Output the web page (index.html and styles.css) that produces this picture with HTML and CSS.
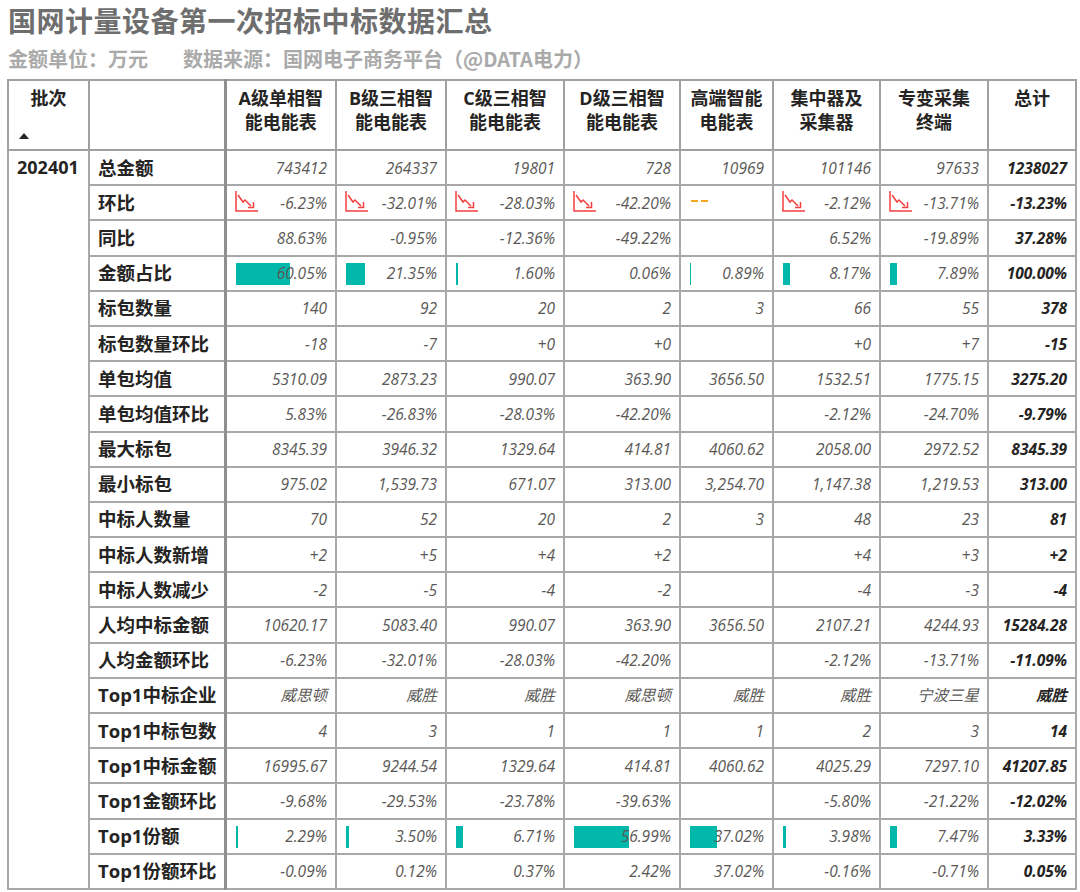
FILE: index.html
```html
<!DOCTYPE html>
<html lang="zh">
<head>
<meta charset="utf-8">
<title>国网计量设备第一次招标中标数据汇总</title>
<link rel="stylesheet" href="styles.css">
</head>
<body>
<div class="page">
  <h1 class="title">国网计量设备第一次招标中标数据汇总</h1>
  <div class="sub"><span>金额单位：万元</span><span>数据来源：国网电子商务平台（@DATA电力）</span></div>
  <table class="grid">
    <colgroup>
      <col class="c-batch"><col class="c-label"><col class="c-a"><col class="c-b"><col class="c-c"><col class="c-d"><col class="c-h"><col class="c-j"><col class="c-z"><col class="c-t">
    </colgroup>
    <thead>
      <tr>
        <th class="hb"><div class="hb-t">批次</div><div class="sort"></div></th>
        <th class="hl"></th>
        <th>A级单相智<br>能电能表</th>
        <th>B级三相智<br>能电能表</th>
        <th>C级三相智<br>能电能表</th>
        <th>D级三相智<br>能电能表</th>
        <th>高端智能<br>电能表</th>
        <th>集中器及<br>采集器</th>
        <th>专变采集<br>终端</th>
        <th>总计</th>
      </tr>
    </thead>
    <tbody>
      <tr><td class="batch" rowspan="21">202401</td><td class="lbl">总金额</td><td>743412</td><td>264337</td><td>19801</td><td>728</td><td>10969</td><td>101146</td><td>97633</td><td class="tot">1238027</td></tr>
      <tr><td class="lbl">环比</td>
        <td><div class="trend"><svg class="ico" viewBox="0 0 23 21"><path d="M1 0V20H23"/><path d="M3 4L8 11L10 9L16 15"/><path d="M18.5 11V16.5H13"/></svg><span>-6.23%</span></div></td>
        <td><div class="trend"><svg class="ico" viewBox="0 0 23 21"><path d="M1 0V20H23"/><path d="M3 4L8 11L10 9L16 15"/><path d="M18.5 11V16.5H13"/></svg><span>-32.01%</span></div></td>
        <td><div class="trend"><svg class="ico" viewBox="0 0 23 21"><path d="M1 0V20H23"/><path d="M3 4L8 11L10 9L16 15"/><path d="M18.5 11V16.5H13"/></svg><span>-28.03%</span></div></td>
        <td><div class="trend"><svg class="ico" viewBox="0 0 23 21"><path d="M1 0V20H23"/><path d="M3 4L8 11L10 9L16 15"/><path d="M18.5 11V16.5H13"/></svg><span>-42.20%</span></div></td>
        <td><div class="trend"><span class="dash"><i></i><i></i></span><span></span></div></td>
        <td><div class="trend"><svg class="ico" viewBox="0 0 23 21"><path d="M1 0V20H23"/><path d="M3 4L8 11L10 9L16 15"/><path d="M18.5 11V16.5H13"/></svg><span>-2.12%</span></div></td>
        <td><div class="trend"><svg class="ico" viewBox="0 0 23 21"><path d="M1 0V20H23"/><path d="M3 4L8 11L10 9L16 15"/><path d="M18.5 11V16.5H13"/></svg><span>-13.71%</span></div></td>
        <td class="tot">-13.23%</td></tr>
      <tr><td class="lbl">同比</td><td>88.63%</td><td>-0.95%</td><td>-12.36%</td><td>-49.22%</td><td></td><td>6.52%</td><td>-19.89%</td><td class="tot">37.28%</td></tr>
      <tr><td class="lbl">金额占比</td>
        <td class="bar"><span class="b" style="--v:0.6005"></span><span class="n">60.05%</span></td>
        <td class="bar"><span class="b" style="--v:0.2135"></span><span class="n">21.35%</span></td>
        <td class="bar"><span class="b" style="--v:0.016"></span><span class="n">1.60%</span></td>
        <td class="bar"><span class="b" style="--v:0.0006"></span><span class="n">0.06%</span></td>
        <td class="bar"><span class="b" style="--v:0.0089"></span><span class="n">0.89%</span></td>
        <td class="bar"><span class="b" style="--v:0.0817"></span><span class="n">8.17%</span></td>
        <td class="bar"><span class="b" style="--v:0.0789"></span><span class="n">7.89%</span></td>
        <td class="tot">100.00%</td></tr>
      <tr><td class="lbl">标包数量</td><td>140</td><td>92</td><td>20</td><td>2</td><td>3</td><td>66</td><td>55</td><td class="tot">378</td></tr>
      <tr><td class="lbl">标包数量环比</td><td>-18</td><td>-7</td><td>+0</td><td>+0</td><td></td><td>+0</td><td>+7</td><td class="tot">-15</td></tr>
      <tr><td class="lbl">单包均值</td><td>5310.09</td><td>2873.23</td><td>990.07</td><td>363.90</td><td>3656.50</td><td>1532.51</td><td>1775.15</td><td class="tot">3275.20</td></tr>
      <tr><td class="lbl">单包均值环比</td><td>5.83%</td><td>-26.83%</td><td>-28.03%</td><td>-42.20%</td><td></td><td>-2.12%</td><td>-24.70%</td><td class="tot">-9.79%</td></tr>
      <tr><td class="lbl">最大标包</td><td>8345.39</td><td>3946.32</td><td>1329.64</td><td>414.81</td><td>4060.62</td><td>2058.00</td><td>2972.52</td><td class="tot">8345.39</td></tr>
      <tr><td class="lbl">最小标包</td><td>975.02</td><td>1,539.73</td><td>671.07</td><td>313.00</td><td>3,254.70</td><td>1,147.38</td><td>1,219.53</td><td class="tot">313.00</td></tr>
      <tr><td class="lbl">中标人数量</td><td>70</td><td>52</td><td>20</td><td>2</td><td>3</td><td>48</td><td>23</td><td class="tot">81</td></tr>
      <tr><td class="lbl">中标人数新增</td><td>+2</td><td>+5</td><td>+4</td><td>+2</td><td></td><td>+4</td><td>+3</td><td class="tot">+2</td></tr>
      <tr><td class="lbl">中标人数减少</td><td>-2</td><td>-5</td><td>-4</td><td>-2</td><td></td><td>-4</td><td>-3</td><td class="tot">-4</td></tr>
      <tr><td class="lbl">人均中标金额</td><td>10620.17</td><td>5083.40</td><td>990.07</td><td>363.90</td><td>3656.50</td><td>2107.21</td><td>4244.93</td><td class="tot">15284.28</td></tr>
      <tr><td class="lbl">人均金额环比</td><td>-6.23%</td><td>-32.01%</td><td>-28.03%</td><td>-42.20%</td><td></td><td>-2.12%</td><td>-13.71%</td><td class="tot">-11.09%</td></tr>
      <tr><td class="lbl">Top1中标企业</td><td>威思顿</td><td>威胜</td><td>威胜</td><td>威思顿</td><td>威胜</td><td>威胜</td><td>宁波三星</td><td class="tot">威胜</td></tr>
      <tr><td class="lbl">Top1中标包数</td><td>4</td><td>3</td><td>1</td><td>1</td><td>1</td><td>2</td><td>3</td><td class="tot">14</td></tr>
      <tr><td class="lbl">Top1中标金额</td><td>16995.67</td><td>9244.54</td><td>1329.64</td><td>414.81</td><td>4060.62</td><td>4025.29</td><td>7297.10</td><td class="tot">41207.85</td></tr>
      <tr><td class="lbl">Top1金额环比</td><td>-9.68%</td><td>-29.53%</td><td>-23.78%</td><td>-39.63%</td><td></td><td>-5.80%</td><td>-21.22%</td><td class="tot">-12.02%</td></tr>
      <tr><td class="lbl">Top1份额</td>
        <td class="bar"><span class="b" style="--v:0.0229"></span><span class="n">2.29%</span></td>
        <td class="bar"><span class="b" style="--v:0.035"></span><span class="n">3.50%</span></td>
        <td class="bar"><span class="b" style="--v:0.0671"></span><span class="n">6.71%</span></td>
        <td class="bar"><span class="b" style="--v:0.5699"></span><span class="n">56.99%</span></td>
        <td class="bar"><span class="b" style="--v:0.3702"></span><span class="n">37.02%</span></td>
        <td class="bar"><span class="b" style="--v:0.0398"></span><span class="n">3.98%</span></td>
        <td class="bar"><span class="b" style="--v:0.0747"></span><span class="n">7.47%</span></td>
        <td class="tot">3.33%</td></tr>
      <tr><td class="lbl">Top1份额环比</td><td>-0.09%</td><td>0.12%</td><td>0.37%</td><td>2.42%</td><td>37.02%</td><td>-0.16%</td><td>-0.71%</td><td class="tot">0.05%</td></tr>
    </tbody>
  </table>
</div>
</body>
</html>
```
FILE: styles.css
```css
html, body {
  margin: 0;
  padding: 0;
  background: #ffffff;
}
body {
  font-family: "Open Sans", "Noto Sans CJK SC", sans-serif;
  color: #252423;
}
.page {
  padding: 4px 5px 0 7px;
}
.title {
  margin: 0;
  padding-left: 1px;
  font-family: "Noto Sans CJK SC", sans-serif;
  font-size: 28px;
  line-height: 32px;
  font-weight: 700;
  color: #6e6e6e;
  letter-spacing: 0.5px;
}
.sub {
  display: flex;
  gap: 35px;
  padding-left: 1px;
  margin-top: 9px;
  font-family: "Noto Sans CJK SC", sans-serif;
  font-size: 20px;
  line-height: 28px;
  font-weight: 700;
  color: #aaaaaa;
}
.grid {
  margin-top: 6px;
  width: 1068px;
  table-layout: fixed;
  border-collapse: collapse;
  border: 2px solid #a0a0a0;
}
.c-batch { width: 81px; }
.c-label { width: 136px; }
.c-a { width: 111px; }
.c-b { width: 110px; }
.c-c { width: 118px; }
.c-d { width: 116px; }
.c-h { width: 93px; }
.c-j { width: 107px; }
.c-z { width: 108px; }
.c-t { width: 88px; }

.grid th {
  height: 63px;
  padding: 5px 2px 0;
  vertical-align: top;
  text-align: center;
  font-family: "Open Sans", "Noto Sans CJK SC", sans-serif;
  font-size: 18px;
  line-height: 24px;
  font-weight: 700;
  color: #252423;
  border: 2px solid #a0a0a0;
}
.grid th.hl {
  border-right: 3px solid #8f8f8f;
}
.hb-t {
  text-align: center;
}
.sort {
  width: 0;
  height: 0;
  margin: 23px 0 0 8px;
  border-left: 5px solid transparent;
  border-right: 5px solid transparent;
  border-bottom: 6px solid #252423;
}
.grid td {
  height: 33.2px;
  padding: 0 8px 0 8px;
  text-align: right;
  vertical-align: middle;
  white-space: nowrap;
  font-size: 15.5px;
  line-height: 20px;
  font-style: italic;
  color: #5a5856;
  border: 2px solid #a8a8a8;
}
.grid td.batch {
  vertical-align: top;
  text-align: left;
  padding: 5px 0 0 8px;
  font-style: normal;
  font-weight: 700;
  font-size: 18px;
  line-height: 22px;
  color: #252423;
}
.grid td.lbl {
  text-align: left;
  font-style: normal;
  font-weight: 700;
  font-size: 18.5px;
  color: #252423;
  border-right: 3px solid #8f8f8f;
}
.grid td.tot {
  font-weight: 700;
  color: #252423;
}
.trend {
  display: flex;
  align-items: center;
  justify-content: space-between;
}
.ico {
  width: 23px;
  height: 21px;
  fill: none;
  stroke: #f43f3f;
  stroke-width: 1.5;
  margin-top: -2px;
}
.dash {
  display: flex;
  gap: 3px;
  margin-left: 2px;
  margin-top: -4px;
}
.dash i {
  display: block;
  width: 7px;
  height: 2px;
  background: #f7a51c;
}
.grid td.bar {
  position: relative;
}
.bar .b {
  position: absolute;
  left: 9px;
  top: 6px;
  bottom: 5px;
  width: calc((100% - 18px) * var(--v));
  background: #01b8aa;
}
.bar .n {
  position: relative;
}
```
